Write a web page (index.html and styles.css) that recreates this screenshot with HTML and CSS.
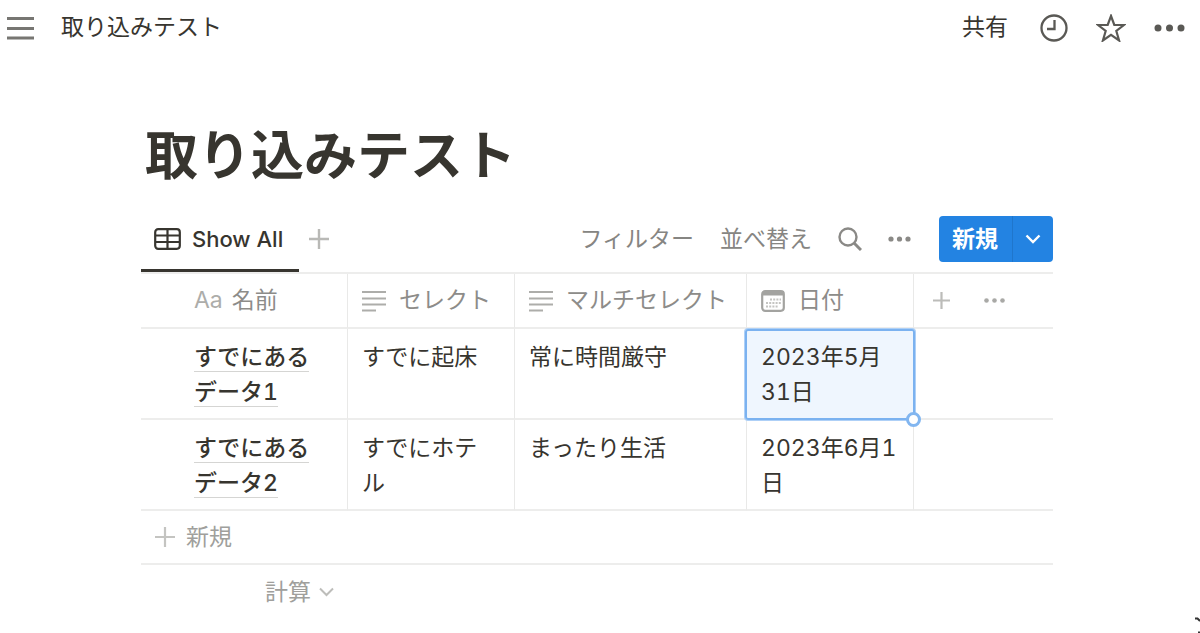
FILE: index.html
```html
<!DOCTYPE html>
<html lang="ja">
	<head>
		<meta charset="UTF-8">
		<title>取り込みテスト</title>
		<link rel="stylesheet" href="styles.css">
	</head>
	<body>
		<header class="topbar">
			<button type="button" class="btn menu" aria-label="メニュー">
				<svg width="28" height="24" viewBox="0 0 28 24"><path d="M0 2.5h27M0 12.5h27M0 22h27" stroke="#777672" stroke-width="3"/></svg>
			</button>
			<a href="#" class="crumb">取り込みテスト</a>
			<button type="button" class="btn share">共有</button>
			<button type="button" class="btn" aria-label="更新履歴">
				<svg width="28" height="28" viewBox="0 0 28 28" fill="none" stroke="#5a5955" stroke-width="2.3"><circle cx="14" cy="14" r="12.5"/><path d="M14.5 6v9H7"/></svg>
			</button>
			<button type="button" class="btn" aria-label="お気に入り">
				<svg width="30" height="28" viewBox="0 0 30 28" fill="none" stroke="#5a5955" stroke-width="2.2"><path d="M15 2l3.3 9H28l-7.7 6 2.8 9.5-8.1-5.6-8.1 5.6L9.7 17 2 11h9.7z"/></svg>
			</button>
			<button type="button" class="btn" aria-label="その他">
				<svg width="31" height="8" viewBox="0 0 31 8" fill="#5a5955"><circle cx="4" cy="4" r="3.5"/><circle cx="15.5" cy="4" r="3.5"/><circle cx="27" cy="4" r="3.5"/></svg>
			</button>
		</header>

		<main class="page">
			<h1 class="title">取り込みテスト</h1>

			<div class="toolbar">
				<button type="button" class="btn tab active">
					<svg width="27" height="22" viewBox="0 0 27 22" fill="none" stroke="#37352f" stroke-width="2.2"><rect x="1.2" y="1.2" width="24.6" height="19.6" rx="3"/><path d="M1 7.5h25M1 14h25M13.5 1v20"/></svg>
					<span>Show All</span>
				</button>
				<button type="button" class="btn addview" aria-label="ビューを追加">
					<svg width="20" height="20" viewBox="0 0 20 20"><path d="M0 10h20M10 0v20" stroke="#b9b9b6" stroke-width="2.4"/></svg>
				</button>
				<div class="tools">
					<button type="button" class="btn">フィルター</button>
					<button type="button" class="btn">並べ替え</button>
					<button type="button" class="btn" aria-label="検索">
						<svg width="24" height="24" viewBox="0 0 24 24" fill="none" stroke="#8a8986"><circle cx="10" cy="10" r="8.5" stroke-width="2.4"/><path d="M16 16l7 7" stroke-width="3"/></svg>
					</button>
					<button type="button" class="btn" aria-label="オプション">
						<svg width="23" height="6" viewBox="0 0 23 6" fill="#8a8986"><circle cx="3" cy="3" r="2.6"/><circle cx="11.5" cy="3" r="2.6"/><circle cx="20" cy="3" r="2.6"/></svg>
					</button>
				</div>
				<div class="new">
					<button type="button" class="btn new-main">新規</button>
					<button type="button" class="btn new-more" aria-label="テンプレート">
						<svg width="16" height="10" viewBox="0 0 16 10" fill="none" stroke="#fff" stroke-width="2.4"><path d="M1.5 1.5L8 8l6.5-6.5"/></svg>
					</button>
				</div>
			</div>

			<table class="grid">
				<colgroup>
					<col class="c-name">
					<col class="c-select">
					<col class="c-multi">
					<col class="c-date">
					<col>
				</colgroup>
				<thead>
					<tr>
						<th class="name"><div class="head"><span class="aa">Aa</span>名前</div></th>
						<th><div class="head">
							<svg width="24" height="22" viewBox="0 0 24 22"><path d="M0 2h24M0 8.5h24M0 14.5h24M0 20.5h14" stroke="#adadaa" stroke-width="2"/></svg>
							セレクト
						</div></th>
						<th><div class="head">
							<svg width="24" height="22" viewBox="0 0 24 22"><path d="M0 2h24M0 8.5h24M0 14.5h24M0 20.5h14" stroke="#adadaa" stroke-width="2"/></svg>
							マルチセレクト
						</div></th>
						<th><div class="head">
							<svg width="24" height="22" viewBox="0 0 24 22"><rect x="1.2" y="1.2" width="21.6" height="19.6" rx="3" fill="none" stroke="#a3a3a0" stroke-width="2.2"/><path d="M2 3.5h20" stroke="#a3a3a0" stroke-width="4"/><path d="M9 9.500h11M5 13h15M5 16.500h12" stroke="#c4c4c1" stroke-width="2" stroke-dasharray="2 1.2"/></svg>
							日付
						</div></th>
						<th><div class="head actions">
							<button type="button" class="btn" aria-label="プロパティを追加">
								<svg width="17" height="17" viewBox="0 0 17 17"><path d="M0 8.5h17M8.5 0v17" stroke="#bcbcb9" stroke-width="2.2"/></svg>
							</button>
							<button type="button" class="btn" aria-label="プロパティ">
								<svg width="21" height="5" viewBox="0 0 21 5" fill="#a9a9a6"><circle cx="2.5" cy="2.5" r="2.3"/><circle cx="10.5" cy="2.5" r="2.3"/><circle cx="18.5" cy="2.5" r="2.3"/></svg>
							</button>
						</div></th>
					</tr>
				</thead>
				<tbody>
					<tr>
						<td class="name"><a href="#">すでにあるデータ1</a></td>
						<td>すでに起床</td>
						<td>常に時間厳守</td>
						<td class="selected">2023年5月31日</td>
						<td></td>
					</tr>
					<tr>
						<td class="name"><a href="#">すでにあるデータ2</a></td>
						<td>すでにホテル</td>
						<td>まったり生活</td>
						<td>2023年6月1日</td>
						<td></td>
					</tr>
				</tbody>
			</table>

			<button type="button" class="btn newrow">
				<svg width="20" height="20" viewBox="0 0 20 20"><path d="M0 10h20M10 0v20" stroke="#c4c4c1" stroke-width="2.2"/></svg>
				新規
			</button>
			<button type="button" class="btn calc">
				計算
				<svg width="15" height="10" viewBox="0 0 15 10" fill="none" stroke="#bdbdba" stroke-width="2"><path d="M1 1.5L7.5 8 14 1.5"/></svg>
			</button>
		</main>

		<!-- マウスカーソル -->
		<svg class="cursor" width="5" height="16" viewBox="0 0 5 16" fill="none" stroke="#333" stroke-width="2"><path d="M0 1.5h2.5L5 4M3 15.5h2"/></svg>
	</body>
</html>
```

FILE: styles.css
```css
*,
*::before,
*::after{
	box-sizing:border-box;
}
body{
	margin:0;
	background:#fff;
	color:#37352f;
	font-family:Inter,"Noto Sans CJK JP",sans-serif;
	font-size:23px;
	font-variant-numeric:tabular-nums;
	line-height:35px;
}
svg{
	display:block;
	flex:none;
}
.btn{
	display:flex;
	align-items:center;
	padding:0;
	border:0;
	background:none;
	color:inherit;
	font:inherit;
	white-space:nowrap;
	cursor:pointer;
}
a{
	color:inherit;
	text-decoration:none;
}

/* 上部バー */
.topbar{
	display:flex;
	align-items:center;
	gap:28px;
	height:56px;
	padding:0 15px 0 7px;
}
.topbar .menu{
	margin-right:-2px;
}
.crumb,
.share{
	padding-bottom:2px;
}
.share{
	margin-left:auto;
	padding-right:4px;
}

.page{
	padding:0 147px 0 141px;
}
.title{
	margin:64px 0 0;
	padding-left:4px;
	font-size:53px;
	font-weight:700;
	line-height:72px;
}

/* ビュータブとツール */
.toolbar{
	display:flex;
	align-items:center;
	height:66px;
	margin-top:14px;
}
.tab{
	align-self:stretch;
	gap:11px;
	padding:3px 16px 0 13px;
	border-bottom:3px solid transparent;
	font-size:22px;
	font-weight:500;
}
.tab.active{
	border-bottom-color:#37352f;
}
.addview{
	margin-left:10px;
}
.tools{
	display:flex;
	align-items:center;
	gap:26px;
	margin-left:auto;
	margin-right:28px;
	color:#868582;
}
.new{
	display:flex;
	height:46px;
	border-radius:4px;
	overflow:hidden;
	background:#2383e2;
	color:#fff;
}
.new-main{
	padding:0 14px 0 13px;
	border-right:1px solid #1f76cc;
	font-weight:700;
}
.new-more{
	padding:0 12px;
}

/* テーブル */
.grid{
	width:100%;
	border-top:2px solid #ededec;
	border-spacing:0;
	table-layout:fixed;
}
.c-name{
	width:207px;
}
.c-select,
.c-date{
	width:167px;
}
.c-multi{
	width:232px;
}
th,
td{
	padding:11px 14px 8px 14px;
	border-right:1px solid #e9e9e8;
	border-bottom:2px solid #ededec;
	text-align:left;
	vertical-align:top;
}
th{
	padding-top:9px;
	padding-bottom:9px;
	color:#8d8c89;
	font-weight:400;
}
th:last-child,
td:last-child{
	border-right:0;
}
.name{
	padding-left:53px;
	padding-right:24px;
}
td.name{
	font-weight:500;
}
td.name a{
	border-bottom:1px solid #d5d5d3;
}
.head{
	display:flex;
	align-items:center;
	gap:13px;
	height:35px;
	white-space:nowrap;
}
.name .head{
	gap:9px;
}
.aa{
	color:#adadaa;
}
.head.actions{
	gap:34px;
	padding-left:5px;
}

/* 選択中のセル */
.selected{
	position:relative;
	background:#eff6fe;
}
.selected::before{
	content:"";
	position:absolute;
	top:0;
	right:-2px;
	bottom:-2px;
	left:-2px;
	border:2px solid #7bb2f0;
	border-radius:3px;
	box-shadow:0 0 0 1px #aed0f7;
}
.selected::after{
	content:"";
	position:absolute;
	right:-8px;
	bottom:-9px;
	width:15px;
	height:15px;
	border:3px solid #82b6f0;
	border-radius:50%;
	background:#fff;
}

.newrow{
	gap:11px;
	width:100%;
	height:54px;
	padding-left:14px;
	border-bottom:2px solid #ededec;
	color:#a09f9c;
}
.calc{
	justify-content:flex-end;
	gap:8px;
	width:207px;
	height:54px;
	padding-right:14px;
	color:#a09f9c;
}

.cursor{
	position:fixed;
	right:0;
	bottom:0;
}
```
